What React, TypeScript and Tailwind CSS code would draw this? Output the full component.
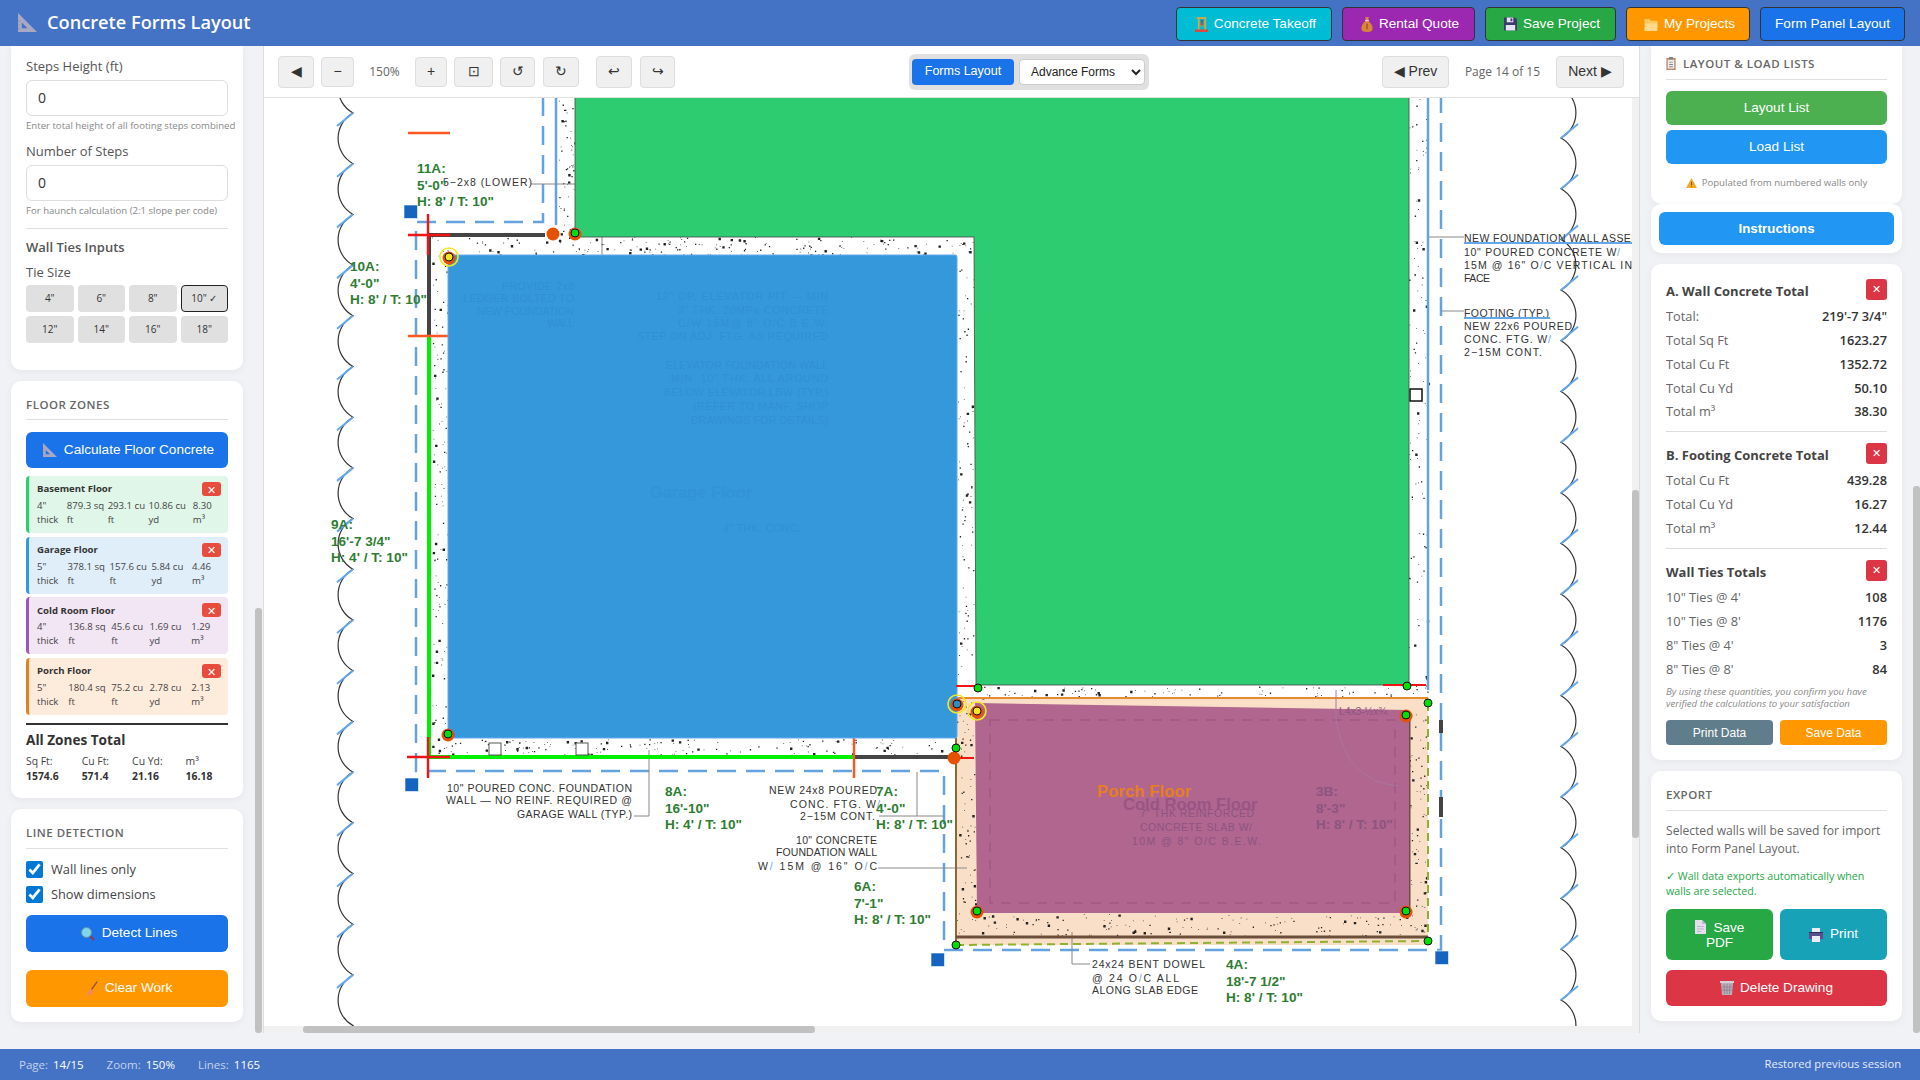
import type { ReactNode } from 'react';

const sans = "font-['Open_Sans',sans-serif]";
const arial = "font-['Liberation_Sans',Arial,sans-serif]";

function RulerIcon({ className }: { className: string }) {
  return (
    <svg viewBox="0 0 20 20" preserveAspectRatio="none" className={className}>
      <path fillRule="evenodd" fill="#a9a8c4" d="M0 0 L20 20 H0 Z M4 10 V16 H10 Z" />
      <path fill="#8f8eaa" d="M0 16h2v1H0zM0 12h2v1H0zM0 8h2v1H0z" />
    </svg>
  );
}

function CraneIcon() {
  return (
    <svg viewBox="0 0 14 16" className="w-[13px] h-[15px]">
      <path fill="#c9a94a" d="M2 0h10v2H2zM3 2h2v12H3zM10 2h2v12h-2zM3 5h9v1H3zM3 9h9v1H3z" />
      <path fill="#3d6f8f" d="M6 3h3v4H6z" />
      <path fill="#e0463c" d="M0 13.5h14V16H0zM6 7h3v2H6z" />
    </svg>
  );
}

function BagIcon() {
  return (
    <svg viewBox="0 0 12 16" className="w-[12px] h-[15px]">
      <path fill="#d9853a" d="M4 0h4L7 4c3 2 5 5 5 8 0 3-2 4-6 4s-6-1-6-4c0-3 2-6 5-8z" />
      <path fill="#f7d9a8" d="M4 3h4v1.5H4z" />
      <path fill="#8a4a18" d="M5.4 7h1.2v6H5.4z" />
    </svg>
  );
}

function FloppyIcon() {
  return (
    <svg viewBox="0 0 14 14" className="w-[13px] h-[14px]">
      <path fill="#3f3a6e" d="M0 0h12l2 2v12H0z" />
      <path fill="#e6e2f2" d="M3 0h7v5H3zM2 8h10v6H2z" />
      <path fill="#3f3a6e" d="M7 1h2v3H7z" />
    </svg>
  );
}

function FolderIcon() {
  return (
    <svg viewBox="0 0 14 14" className="w-[14px] h-[13px]">
      <path fill="#ffc860" d="M0 1h5l2 2h7v11H0z" />
      <path fill="#ffd98c" d="M1 6h13l-1 8H0z" />
    </svg>
  );
}

function ClipIcon() {
  return (
    <svg viewBox="0 0 10 14" className="w-[10px] h-[13px]">
      <path fill="#b98a6a" d="M0 1h10v13H0z" />
      <path fill="#f3eee9" d="M1.5 3h7v9.5h-7z" />
      <path fill="#7d7d92" d="M3 0h4v2.5H3zM3 5h4v1H3zM3 7.5h4v1H3zM3 10h4v1H3z" />
    </svg>
  );
}

function WarnIcon() {
  return (
    <svg viewBox="0 0 12 11" className="w-[11px] h-[10px]">
      <path fill="#f6a623" d="M6 0l6 11H0z" />
      <path fill="#5b4a20" d="M5.5 4h1v4h-1zM5.5 8.7h1v1h-1z" />
    </svg>
  );
}

function LensIcon() {
  return (
    <svg viewBox="0 0 14 14" className="w-[14px] h-[14px]">
      <path stroke="#7d3f6f" strokeWidth="2.4" d="M8 8l5 5" />
      <circle cx="5.5" cy="5.5" r="5" fill="#7fd6e6" stroke="#5f8fb0" strokeWidth="1" />
    </svg>
  );
}

function BroomIcon() {
  return (
    <svg viewBox="0 0 14 16" className="w-[12px] h-[15px]">
      <path stroke="#8a4b3a" strokeWidth="1.4" d="M13 0L6 10" />
      <path fill="#f08a5d" d="M5 8l4 3-4 5H0z" />
    </svg>
  );
}

function DocIcon() {
  return (
    <svg viewBox="0 0 11 14" className="inline-block align-[-2px] w-[11px] h-[14px]">
      <path fill="#e4dfee" d="M0 0h7l4 4v10H0z" />
      <path fill="#bdb6cf" d="M7 0l4 4H7zM2 6h7v1H2zM2 8.5h7v1H2zM2 11h4v1H2z" />
    </svg>
  );
}

function PrinterIcon() {
  return (
    <svg viewBox="0 0 14 14" className="w-[14px] h-[14px]">
      <path fill="#5a4f8c" d="M0 4h14v7H0z" />
      <path fill="#efeaf5" d="M3 0h8v4H3zM3 8h8v6H3z" />
      <path fill="#332c5e" d="M0 4h14v1H0z" />
    </svg>
  );
}

function BinIcon() {
  return (
    <svg viewBox="0 0 14 14" className="w-[14px] h-[14px]">
      <path fill="#d5cfd9" d="M0 0h14v2H0z" />
      <path fill="#b9aeb9" d="M1 2h12l-1 12H2z" />
      <path stroke="#8c7f8c" strokeWidth="0.8" d="M4 3l.5 10M7 3v10M10 3l-.5 10M2 6h10M2 9h10" />
    </svg>
  );
}

function XBtn({ small }: { small?: boolean }) {
  return small ? (
    <span className="w-[19px] h-[14px] rounded-[3px] bg-[#e74c3c] text-white flex items-center justify-center text-[11px] leading-none">✕</span>
  ) : (
    <span className={`w-[21px] h-[21px] rounded-[3px] bg-[#dc3545] text-white flex items-center justify-center text-[11px] leading-none ${arial}`}>✕</span>
  );
}

function CardTitle({ children, cls }: { children: ReactNode; cls: string }) {
  return (
    <div className={`h-[15px] pt-[1px] flex items-center gap-[7px] text-[11.5px] font-semibold tracking-[0.5px] uppercase text-[#666] border-b border-[#e0e0e0] box-content ${cls}`}>
      {children}
    </div>
  );
}

const ties = ['4"', '6"', '8"', '10" ✓', '12"', '14"', '16"', '18"'];

const zones = [
  { name: 'Basement Floor', bg: 'bg-[#e0f6e8]', bar: 'border-[#2ecc71]', vals: ['4" thick', '879.3 sq ft', '293.1 cu ft', '10.86 cu yd', '8.30 m³'] },
  { name: 'Garage Floor', bg: 'bg-[#e0eefa]', bar: 'border-[#3498db]', vals: ['5" thick', '378.1 sq ft', '157.6 cu ft', '5.84 cu yd', '4.46 m³'] },
  { name: 'Cold Room Floor', bg: 'bg-[#f2e5f4]', bar: 'border-[#9b59b6]', vals: ['4" thick', '136.8 sq ft', '45.6 cu ft', '1.69 cu yd', '1.29 m³'] },
  { name: 'Porch Floor', bg: 'bg-[#fdebdc]', bar: 'border-[#e67e22]', vals: ['5" thick', '180.4 sq ft', '75.2 cu ft', '2.78 cu yd', '2.13 m³'] },
];

const totals = [
  ['Sq Ft:', '1574.6'],
  ['Cu Ft:', '571.4'],
  ['Cu Yd:', '21.16'],
  ['m³', '16.18'],
];

function LeftSidebar() {
  return (
    <aside className="relative w-[263px] h-[987px] shrink-0 pl-[11px] pr-[20px] flex flex-col gap-[11px] overflow-hidden">
      <div className="bg-white rounded-b-[10px] shadow-[0_2px_8px_rgba(0,0,0,0.05)] px-[15px] pt-[11px] h-[324px] shrink-0">
        <div className="h-[18px] leading-[18px] text-[13px] font-medium text-[#555]">Steps Height (ft)</div>
        <input readOnly value="0" className="mt-[5px] w-full h-[35.5px] px-[11px] pb-[1px] border border-[#ddd] rounded-[6px] text-[14px] text-[#333] bg-white" />
        <div className="mt-[3.5px] h-[14px] leading-[14px] text-[9.6px] text-[#888] whitespace-nowrap">Enter total height of all footing steps combined</div>
        <div className="mt-[9px] h-[18px] leading-[18px] text-[13px] font-medium text-[#555]">Number of Steps</div>
        <input readOnly value="0" className="mt-[5px] w-full h-[35.5px] px-[11px] pb-[1px] border border-[#ddd] rounded-[6px] text-[14px] text-[#333] bg-white" />
        <div className="mt-[3.5px] h-[14px] leading-[14px] text-[9.6px] text-[#888] whitespace-nowrap">For haunch calculation (2:1 slope per code)</div>
        <div className="mt-[10px] border-t border-[#e0e0e0]" />
        <div className="mt-[9px] h-[18px] leading-[18px] text-[13px] font-semibold text-[#555]">Wall Ties Inputs</div>
        <div className="mt-[7px] h-[18px] leading-[18px] text-[13px] text-[#555]">Tie Size</div>
        <div className="mt-[4px] grid grid-cols-4 gap-[4px]">
          {ties.map((t) => (
            <div key={t} className={`h-[27px] rounded-[4px] bg-[#e0e0e0] flex items-center justify-center text-[10px] font-medium text-[#333] ${t.includes('✓') ? 'border border-[#222]' : ''}`}>
              {t}
            </div>
          ))}
        </div>
      </div>

      <div className="bg-white rounded-[10px] shadow-[0_2px_8px_rgba(0,0,0,0.05)] px-[15px] pt-[15px] h-[417px] shrink-0">
        <CardTitle cls="pb-[7px]">Floor Zones</CardTitle>
        <button className={`mt-[12px] w-full h-[36px] pl-[3px] rounded-[6px] bg-[#1a73e8] text-white text-[13.6px] flex items-center justify-center gap-[7px] ${arial}`}>
          <RulerIcon className="w-[14px] h-[14px]" />
          Calculate Floor Concrete
        </button>
        <div className="mt-[8px] flex flex-col gap-[3.7px]">
          {zones.map((z) => (
            <div key={z.name} className={`h-[57px] rounded-[4px] border-l-[3px] pl-[8px] pr-[7px] pt-[6px] ${z.bg} ${z.bar}`}>
              <div className="flex items-center justify-between h-[14px]">
                <span className="pt-[1px] text-[9.6px] font-bold text-[#333]">{z.name}</span>
                <XBtn small />
              </div>
              <div className="mt-[3px] flex justify-between gap-[2px] text-[9.6px] leading-[14px] text-[#444]">
                {z.vals.map((v) => (
                  <span key={v}>{v}</span>
                ))}
              </div>
            </div>
          ))}
        </div>
        <div className="mt-[8px] border-t-2 border-[#333]" />
        <div className="mt-[6px] h-[18px] leading-[18px] text-[13.6px] font-bold text-[#333]">All Zones Total</div>
        <div className="mt-[5px] flex gap-[23px] text-[10.4px] leading-[14.5px] text-[#444]">
          {totals.map(([k, v]) => (
            <div key={k}>
              <div>{k}</div>
              <div className="font-bold text-[#333]">{v}</div>
            </div>
          ))}
        </div>
      </div>

      <div className="bg-white rounded-[10px] shadow-[0_2px_8px_rgba(0,0,0,0.05)] px-[15px] pt-[15px] h-[213px] shrink-0">
        <CardTitle cls="pb-[8px]">Line Detection</CardTitle>
        <label className="mt-[12px] flex items-center gap-[8px] h-[17px] text-[12.8px] text-[#444]">
          <input type="checkbox" defaultChecked className="w-[17px] h-[17px] m-0 accent-[#0078d4]" />
          <span className="pt-[1px]">Wall lines only</span>
        </label>
        <label className="mt-[8px] flex items-center gap-[8px] h-[17px] text-[12.8px] text-[#444]">
          <input type="checkbox" defaultChecked className="w-[17px] h-[17px] m-0 accent-[#0078d4]" />
          <span className="pt-[1px]">Show dimensions</span>
        </label>
        <button className={`mt-[12px] w-full h-[37px] pl-[4px] rounded-[6px] bg-[#1a73e8] text-white text-[13.6px] flex items-center justify-center gap-[7px] ${arial}`}>
          <LensIcon />
          Detect Lines
        </button>
        <button className={`mt-[18px] w-full h-[37px] pl-[4px] rounded-[6px] bg-[#ff9800] text-white text-[13.6px] flex items-center justify-center gap-[7px] ${arial}`}>
          <BroomIcon />
          Clear Work
        </button>
      </div>

      <div className="absolute right-[1px] top-[562px] bottom-0 w-[7px] rounded-[3px] bg-[#c1c1c1]" />
    </aside>
  );
}

const wallRows = [
  ['Total:', `219'-7 3/4"`],
  ['Total Sq Ft', '1623.27'],
  ['Total Cu Ft', '1352.72'],
  ['Total Cu Yd', '50.10'],
  ['Total m³', '38.30'],
];
const footingRows = [
  ['Total Cu Ft', '439.28'],
  ['Total Cu Yd', '16.27'],
  ['Total m³', '12.44'],
];
const tieRows = [
  [`10" Ties @ 4'`, '108'],
  [`10" Ties @ 8'`, '1176'],
  [`8" Ties @ 4'`, '3'],
  [`8" Ties @ 8'`, '84'],
];

function Rows({ rows }: { rows: string[][] }) {
  return (
    <div className="mt-[5px]">
      {rows.map(([k, v]) => (
        <div key={k} className="h-[23.75px] flex items-center justify-between text-[12.8px]">
          <span className="text-[#666]">{k}</span>
          <span className="font-semibold text-[#333]">{v}</span>
        </div>
      ))}
    </div>
  );
}

function Heading({ children }: { children: ReactNode }) {
  return (
    <div className="h-[21px] flex items-center justify-between">
      <span className="pt-[4px] text-[13px] font-bold text-[#444]">{children}</span>
      <XBtn />
    </div>
  );
}

function RightSidebar() {
  return (
    <aside className="relative w-[280px] h-[987px] shrink-0 pl-[11px] pr-[18px] flex flex-col overflow-hidden">
      <div className="bg-white rounded-b-[10px] shadow-[0_2px_8px_rgba(0,0,0,0.05)] px-[15px] pt-[9px] h-[158px] shrink-0">
        <CardTitle cls="pb-[8px]">
          <ClipIcon />
          Layout &amp; Load Lists
        </CardTitle>
        <button className={`mt-[11px] w-full h-[34px] rounded-[6px] bg-[#4caf50] text-white text-[13.6px] ${arial}`}>Layout List</button>
        <button className={`mt-[5px] w-full h-[34px] rounded-[6px] bg-[#2196f3] text-white text-[13.6px] ${arial}`}>Load List</button>
        <div className="mt-[12px] h-[14px] flex items-center justify-center gap-[5px] text-[9.6px] text-[#888]">
          <WarnIcon />
          Populated from numbered walls only
        </div>
      </div>

      <div className="bg-white rounded-[10px] shadow-[0_2px_8px_rgba(0,0,0,0.05)] p-[8px] h-[49px] shrink-0">
        <button className={`w-full h-[33px] rounded-[6px] bg-[#2196f3] text-white text-[13.3px] font-bold ${arial}`}>Instructions</button>
      </div>

      <div className="mt-[11px] bg-white rounded-[10px] shadow-[0_2px_8px_rgba(0,0,0,0.05)] px-[15px] pt-[15px] h-[496px] shrink-0">
        <Heading>A. Wall Concrete Total</Heading>
        <Rows rows={wallRows} />
        <div className="mt-[7px] border-t border-[#ddd]" />
        <div className="mt-[11px]">
          <Heading>B. Footing Concrete Total</Heading>
        </div>
        <Rows rows={footingRows} />
        <div className="mt-[8px] border-t border-[#ddd]" />
        <div className="mt-[11px]">
          <Heading>Wall Ties Totals</Heading>
        </div>
        <Rows rows={tieRows} />
        <div className="mt-[5px] text-[9.6px] leading-[12px] italic text-[#888]">
          By using these quantities, you confirm you have verified the calculations to your satisfaction
        </div>
        <div className={`mt-[10px] grid grid-cols-2 gap-[7px] text-white text-[12px] ${arial}`}>
          <button className="h-[25px] rounded-[4px] bg-[#607d8b]">Print Data</button>
          <button className="h-[25px] rounded-[4px] bg-[#ff9800]">Save Data</button>
        </div>
      </div>

      <div className="mt-[11px] bg-white rounded-[10px] shadow-[0_2px_8px_rgba(0,0,0,0.05)] px-[15px] pt-[15px] h-[250px] shrink-0">
        <CardTitle cls="pb-[8px]">Export</CardTitle>
        <div className="mt-[11px] text-[12.1px] leading-[18px] text-[#666]">Selected walls will be saved for import into Form Panel Layout.</div>
        <div className="mt-[11px] text-[10.7px] leading-[15px] text-[#28a745]">✓ Wall data exports automatically when walls are selected.</div>
        <div className={`mt-[10px] grid grid-cols-2 gap-[7px] text-white text-[13.6px] ${arial}`}>
          <button className="h-[51px] rounded-[6px] bg-[#28a745] leading-[15px] px-[20px]">
            <DocIcon /> <span className="ml-[4px]">Save</span> PDF
          </button>
          <button className="h-[51px] rounded-[6px] bg-[#17a2b8] flex items-center justify-center gap-[7px]">
            <PrinterIcon />
            Print
          </button>
        </div>
        <button className={`mt-[10px] w-full h-[36px] rounded-[6px] bg-[#dc3545] text-white text-[13.6px] flex items-center justify-center gap-[6px] ${arial}`}>
          <BinIcon />
          Delete Drawing
        </button>
      </div>

      <div className="absolute right-0 top-[440px] bottom-0 w-[7px] rounded-[3px] bg-[#c1c1c1]" />
    </aside>
  );
}

function ToolBtn({ children, w, h = 'h-[30px]' }: { children: ReactNode; w: string; h?: string }) {
  return (
    <button className={`${w} ${h} shrink-0 rounded-[4px] bg-[#f0f0f0] border border-[#ddd] flex items-center justify-center text-[14px] text-[#333] ${arial}`}>
      {children}
    </button>
  );
}

function Toolbar() {
  return (
    <div className="h-[52px] shrink-0 bg-white border-b border-[#e0e0e0] flex items-center pl-[14px] pr-[15px]">
      <ToolBtn w="w-[36px]" h="h-[32px]">◀</ToolBtn>
      <div className="w-[7px]" />
      <ToolBtn w="w-[33px]">−</ToolBtn>
      <span className="w-[61px] text-center text-[12px] text-[#666]">150%</span>
      <ToolBtn w="w-[32px]">+</ToolBtn>
      <div className="w-[7px]" />
      <ToolBtn w="w-[39px]">⊡</ToolBtn>
      <div className="w-[7px]" />
      <ToolBtn w="w-[35px]">↺</ToolBtn>
      <div className="w-[8px]" />
      <ToolBtn w="w-[36px]">↻</ToolBtn>
      <div className="w-[17px]" />
      <ToolBtn w="w-[36px]" h="h-[32px]">↩</ToolBtn>
      <div className="w-[8px]" />
      <ToolBtn w="w-[35px]" h="h-[32px]">↪</ToolBtn>

      <div className="ml-[234px] w-[240px] h-[36px] rounded-[6px] bg-[#e0e0e0] flex items-center pl-[3px] pr-[4px] gap-[5px]">
        <button className={`w-[102px] h-[26px] rounded-[4px] bg-[#1a73e8] text-white text-[12.5px] font-medium ${arial}`}>Forms Layout</button>
        <select className={`flex-1 h-[26px] rounded-[4px] bg-white border border-[#ccc] text-[12px] text-[#222] px-[7px] ${arial}`}>
          <option>Advance Forms</option>
        </select>
      </div>

      <div className="flex-1" />
      <ToolBtn w="w-[67px]" h="h-[32px]">◀ Prev</ToolBtn>
      <span className="w-[107px] text-center text-[12px] text-[#666]">Page 14 of 15</span>
      <ToolBtn w="w-[68px]" h="h-[32px]">Next ▶</ToolBtn>
    </div>
  );
}

// cheap seeded speckle for the concrete hatch
function speckle(x: number, y: number, w: number, h: number, n: number, seed: number) {
  let s = seed;
  const rnd = () => {
    s = (s * 16807) % 2147483647;
    return s / 2147483647;
  };
  let d = '';
  for (let i = 0; i < n; i++) {
    const px = (x + rnd() * w).toFixed(1);
    const py = (y + rnd() * h).toFixed(1);
    const sz = rnd() > 0.88 ? 2.4 : rnd() > 0.6 ? 1.3 : 0.8;
    d += `M${px} ${py}h${sz}v${sz}h-${sz}z`;
  }
  return d;
}

function scallops(startY: number, endY: number, x: number, side: number) {
  let d = `M${x} ${startY}`;
  for (let y = startY; y < endY; y += 50.7) {
    d += `A29 29 0 0 ${side} ${x} ${(y + 50.7).toFixed(1)}`;
  }
  return d;
}

function Label({ x, y, lines, fill = '#2e7d32' }: { x: number; y: number; lines: string[]; fill?: string }) {
  return (
    <g fontSize="13.6" fontWeight="700" fill={fill}>
      {lines.map((l, i) => (
        <text key={l} x={x} y={y + 5 + i * 16.7}>
          {l}
        </text>
      ))}
    </g>
  );
}

function Cad({ x, y, w, children, fill = '#333' }: { x: number; y: number; w: number; children: ReactNode; fill?: string }) {
  return (
    <text x={x} y={y + 4} textLength={w} lengthAdjust="spacing" fontSize="10.5" fill={fill}>
      {children}
    </text>
  );
}

const Sl = () => <tspan fill="#64a8ec">/</tspan>;

function Marker({ x, y, ring, orange = true, inner = '#00e000' }: { x: number; y: number; ring?: boolean; orange?: boolean; inner?: string }) {
  return (
    <g>
      {ring && <circle cx={x} cy={y} r="9" fill="none" stroke="#f5e625" strokeWidth="1.6" />}
      {orange && <circle cx={x} cy={y + 1} r="6.5" fill="#e65100" />}
      <circle cx={x} cy={y} r="4" fill={inner} stroke="#111" strokeWidth="1" />
    </g>
  );
}

function Square({ x, y }: { x: number; y: number }) {
  return <rect x={x} y={y} width="13.5" height="13.5" fill="#1565c0" stroke="#fff" strokeWidth="0.6" />;
}

const blueNotes: [number, number, string][] = [
  [655, 296, '12" DP. ELEVATOR PIT — MIN'],
  [677, 310, '3" THK. 20MPa CONCRETE'],
  [677, 323, 'C/W 15M@ 8" O/C B.E.W.'],
  [636, 336, 'STEP DN ADJ. FTG. AS REQUIRED'],
  [665, 365, 'ELEVATOR FOUNDATION WALL'],
  [670, 378, 'MIN. 10" THK. ALL AROUND'],
  [663, 392, 'BELOW ELEVATOR LBW (TYP.)'],
  [692, 406, '(REFER TO MANF. SHOP'],
  [690, 420, 'DRAWINGS FOR DETAILS)'],
];

function Drawing() {
  const hatch =
    speckle(558, 98, 16, 138, 55, 11) +
    speckle(431, 237, 540, 18, 170, 23) +
    speckle(431, 255, 16, 484, 120, 37) +
    speckle(431, 739, 522, 17, 170, 41) +
    speckle(957, 237, 16, 450, 90, 53) +
    speckle(1408, 98, 19, 590, 110, 67) +
    speckle(973, 686, 454, 12, 90, 71) +
    speckle(956, 700, 18, 240, 70, 83) +
    speckle(1408, 712, 18, 225, 70, 97) +
    speckle(974, 914, 434, 22, 130, 101);
  const leftTicks = Array.from({ length: 18 }, (_, i) => 113 + i * 50.7);
  const rightTicks = Array.from({ length: 18 }, (_, i) => 138 + i * 50.7);

  return (
    <svg viewBox="263 98 1369 928" className={`w-[1369px] h-[928px] block ${arial}`}>
      <rect x="263" y="98" width="1369" height="928" fill="#fff" />

      <path d={scallops(113 - 50.7, 1040, 352, 0)} fill="none" stroke="#333" strokeWidth="1.2" />
      <path d={scallops(138 - 50.7, 1040, 1560, 1)} fill="none" stroke="#333" strokeWidth="1.2" />
      {leftTicks.map((y) => (
        <line key={y} x1="352" y1={y} x2="336" y2={y + 13} stroke="#64a8ec" strokeWidth="2" />
      ))}
      {rightTicks.map((y) => (
        <line key={y} x1="1560" y1={y} x2="1577" y2={y - 14} stroke="#64a8ec" strokeWidth="2" />
      ))}

      <path d="M956 698H1427V945H955Z" fill="#f9dfc8" />
      <path d={hatch} fill="#222" />

      {/* dimension and wall lines */}
      <g fill="none" stroke="#64a3e0" strokeWidth="2.5" strokeDasharray="19 10">
        <path d="M542 97V222H415V771H943V950H1440V97" />
      </g>
      <path d="M555 97V225M1427 97V690" stroke="#64a3e0" strokeWidth="2.5" />
      <path d="M1071 932V964H1089M633 816H648V750M878 816H943M916 772V816M877 868H966M1428 237H1463M1441 311H1463M530 184H574M601 237V255" stroke="#888" strokeWidth="1" fill="none" />
      <path d="M428 235H544M428 235V336M853 757H953" stroke="#444" strokeWidth="4" fill="none" />
      <path d="M955 698V945" stroke="#8a6a30" strokeWidth="2" />
      <path d="M428 336V757H853" stroke="#00ee00" strokeWidth="4" fill="none" />
      <path d="M955 937H1427M1408 720V913" stroke="#6b4f3a" strokeWidth="3" fill="none" />
      <path d="M955 698H1427" stroke="#e88a30" strokeWidth="2" />
      <path d="M955 945L1427 941V698" stroke="#8fb030" strokeWidth="2" strokeDasharray="8 5" fill="none" />
      <path d="M407 235H449M427 214V255M406 757H449M427 737V778" stroke="#f01414" strokeWidth="2.4" />
      <path d="M407 133H449M407 336H447M853 738V778" stroke="#ff5722" strokeWidth="2.4" />
      <path d="M1440 720V733M1440 797V817" stroke="#444" strokeWidth="4" />

      <rect x="488" y="743" width="12" height="12" fill="#fff" stroke="#555" />
      <rect x="575" y="743" width="12" height="12" fill="#fff" stroke="#555" />
      <rect x="1409" y="389" width="12" height="12" fill="#fff" stroke="#111" strokeWidth="1.5" />

      {/* floors */}
      <path d="M574 97H1408V685H975L973 237H574Z" fill="#2ecc71" stroke="#444" strokeWidth="0.8" />
      <rect x="447" y="255" width="509" height="483" rx="2" fill="#3498db" stroke="#64a8ec" strokeWidth="1" />
      <path d="M974 703L1408 710V913H976Z" fill="#b0668f" />
      <rect x="989" y="720" width="405" height="183" fill="none" stroke="#a05a85" strokeWidth="1.5" strokeDasharray="10 8" />
      <path d="M1335 690V720Q1345 782 1398 786" fill="none" stroke="#a877a0" strokeWidth="1" />

      <Cad x={501} y={286} w={72} fill="#3190d3">PROVIDE 2x8</Cad>
      <Cad x={462} y={298} w={111} fill="#3190d3">LEDGER BOLTED TO</Cad>
      <Cad x={476} y={311} w={97} fill="#3190d3">NEW FOUNDATION</Cad>
      <Cad x={546} y={323} w={27} fill="#3190d3">WALL</Cad>
      {blueNotes.map(([x, y, t]) => (
        <Cad key={t} x={x} y={y} w={827 - x} fill="#3190d3">{t}</Cad>
      ))}
      <text x="649" y="498" fontSize="16.4" fontWeight="700" fill="#3293d6">Garage Floor</text>
      <Cad x={722} y={528} w={78} fill="#3190d3">4" THK. CONC.</Cad>

      <Cad x={1139} y={813} w={114} fill="#8d5480">7" THK REINFORCED</Cad>
      <Cad x={1139} y={827} w={112} fill="#8d5480">CONCRETE SLAB W/</Cad>
      <Cad x={1131} y={841} w={129} fill="#8d5480">10M @ 8" O/C B.E.W.</Cad>
      <Cad x={1338} y={711} w={48} fill="#8d5480">L4x3-½x¾</Cad>
      <Label x={1315} y={791} lines={['3B:', `8'-3"`, `H: 8' / T: 10"`]} fill="#8d5480" />
      <text x="1122" y="810" fontSize="16.6" fontWeight="700" fill="#9a5484">Cold Room Floor</text>
      <text x="1096" y="797" fontSize="16.8" fontWeight="700" fill="#e67e22">Porch Floor</text>

      {/* CAD notes */}
      <Cad x={442} y={182} w={89}>5−2x8 (LOWER)</Cad>
      <Cad x={1463} y={238} w={176}>NEW FOUNDATION WALL ASSEM</Cad>
      <Cad x={1463} y={252} w={156}>10" POURED CONCRETE W<Sl /></Cad>
      <Cad x={1463} y={265} w={168}>15M @ 16" O<Sl />C VERTICAL IN</Cad>
      <Cad x={1463} y={278} w={26}>FACE</Cad>
      <Cad x={1463} y={313} w={85}>FOOTING (TYP.)</Cad>
      <Cad x={1463} y={326} w={108}>NEW 22x6 POURED</Cad>
      <Cad x={1463} y={339} w={87}>CONC. FTG. W<Sl /></Cad>
      <Cad x={1463} y={352} w={78}>2−15M CONT.</Cad>
      <path d="M1463 243H1632M1463 318H1549" stroke="#64a8ec" strokeWidth="2" />
      <Cad x={446} y={788} w={185}>10" POURED CONC. FOUNDATION</Cad>
      <Cad x={445} y={800} w={186}>WALL — NO REINF. REQUIRED @</Cad>
      <Cad x={516} y={814} w={115}>GARAGE WALL (TYP.)</Cad>
      <Cad x={768} y={790} w={108}>NEW 24x8 POURED</Cad>
      <Cad x={789} y={804} w={90}>CONC. FTG. W<Sl /></Cad>
      <Cad x={799} y={816} w={75}>2−15M CONT.</Cad>
      <Cad x={795} y={840} w={81}>10" CONCRETE</Cad>
      <Cad x={775} y={852} w={101}>FOUNDATION WALL</Cad>
      <Cad x={757} y={866} w={119}>W<Sl /> 15M @ 16" O<Sl />C</Cad>
      <Cad x={1091} y={964} w={113}>24x24 BENT DOWEL</Cad>
      <Cad x={1091} y={978} w={87}>@ 24 O<Sl />C ALL</Cad>
      <Cad x={1091} y={990} w={106}>ALONG SLAB EDGE</Cad>

      <Label x={416} y={168} lines={['11A:', `5'-0"`, `H: 8' / T: 10"`]} />
      <Label x={349} y={266} lines={['10A:', `4'-0"`, `H: 8' / T: 10"`]} />
      <Label x={330} y={524} lines={['9A:', `16'-7 3/4"`, `H: 4' / T: 10"`]} />
      <Label x={664} y={791} lines={['8A:', `16'-10"`, `H: 4' / T: 10"`]} />
      <Label x={875} y={791} lines={['7A:', `4'-0"`, `H: 8' / T: 10"`]} />
      <Label x={853} y={886} lines={['6A:', `7'-1"`, `H: 8' / T: 10"`]} />
      <Label x={1225} y={964} lines={['4A:', `18'-7 1/2"`, `H: 8' / T: 10"`]} />

      <path d="M955 686H975M953 758H973M1382 685H1425" stroke="#f01414" strokeWidth="2" />
      <circle cx="552" cy="234" r="6.5" fill="#e65100" />
      <circle cx="953" cy="758" r="6.5" fill="#e65100" />
      <Marker x={574} y={233} />
      <Marker x={448} y={257} ring inner="#f5e625" />
      <Marker x={447} y={734} />
      <Marker x={977} y={688} orange={false} />
      <Marker x={956} y={704} ring inner="#2b8fc4" />
      <Marker x={976} y={711} ring inner="#f5e625" />
      <Marker x={955} y={748} orange={false} />
      <Marker x={1406} y={686} orange={false} />
      <Marker x={1427} y={703} orange={false} />
      <Marker x={1405} y={715} />
      <Marker x={976} y={911} />
      <Marker x={1405} y={911} />
      <Marker x={955} y={945} orange={false} />
      <Marker x={1427} y={941} orange={false} />

      <Square x={403} y={205} />
      <Square x={404} y={778} />
      <Square x={930} y={953} />
      <Square x={1434} y={951} />
    </svg>
  );
}

function Canvas() {
  return (
    <div className="relative flex-1 min-h-0 bg-white overflow-hidden pb-[7px]">
      <Drawing />
      <div className="absolute left-0 right-0 bottom-0 h-[7px] bg-[#f1f1f1]">
        <div className="ml-[39px] w-[512px] h-[7px] rounded-[3px] bg-[#c1c1c1]" />
      </div>
      <div className="absolute right-0 top-0 bottom-0 w-[7px] bg-[#f1f1f1]">
        <div className="mt-[392px] h-[348px] rounded-[3px] bg-[#c1c1c1]" />
      </div>
    </div>
  );
}

const headerBtns = [
  { label: 'Concrete Takeoff', cls: 'w-[156px] pl-[3px] bg-[#00bcd4]', icon: <CraneIcon /> },
  { label: 'Rental Quote', cls: 'w-[133px] pl-[3px] bg-[#9c27b0]', icon: <BagIcon /> },
  { label: 'Save Project', cls: 'w-[131px] pl-[3px] bg-[#28a745]', icon: <FloppyIcon /> },
  { label: 'My Projects', cls: 'w-[124px] pl-[3px] bg-[#ff9800]', icon: <FolderIcon /> },
  { label: 'Form Panel Layout', cls: 'w-[145px] bg-[#1a73e8]', icon: null },
];

export default function App() {
  return (
    <div className={`w-full h-screen flex flex-col overflow-hidden bg-[#f0f2f5] ${sans}`}>
      <header className="h-[46px] shrink-0 bg-[#4472c4] flex items-center justify-between pl-[18px] pr-[15px]">
        <div className="flex items-center gap-[10px]">
          <RulerIcon className="w-[19px] h-[19px]" />
          <h1 className="text-[18.2px] font-semibold text-white">Concrete Forms Layout</h1>
        </div>
        <div className={`mt-[2px] flex items-center gap-[10px] ${arial}`}>
          {headerBtns.map((b) => (
            <button key={b.label} className={`h-[34px] rounded-[4px] border border-[#333] text-white text-[13.6px] flex items-center justify-center gap-[6px] ${b.cls}`}>
              {b.icon}
              {b.label}
            </button>
          ))}
        </div>
      </header>

      <main className="flex-1 min-h-0 flex pb-[16px]">
        <LeftSidebar />
        <section className="w-[1377px] shrink-0 flex flex-col border-l border-[#ddd] border-r">
          <Toolbar />
          <Canvas />
        </section>
        <RightSidebar />
      </main>

      <footer className="h-[31px] shrink-0 bg-[#4472c4] flex items-center justify-between pl-[19px] pr-[19px] text-[11.5px] text-white">
        <div className="flex gap-[23px]">
          <span><span className="text-[#c5d3ec] mr-[5px]">Page:</span>14/15</span>
          <span><span className="text-[#c5d3ec] mr-[5px]">Zoom:</span>150%</span>
          <span><span className="text-[#c5d3ec] mr-[5px]">Lines:</span>1165</span>
        </div>
        <span className="text-[#e6ecf7] text-[11.2px]">Restored previous session</span>
      </footer>
    </div>
  );
}
